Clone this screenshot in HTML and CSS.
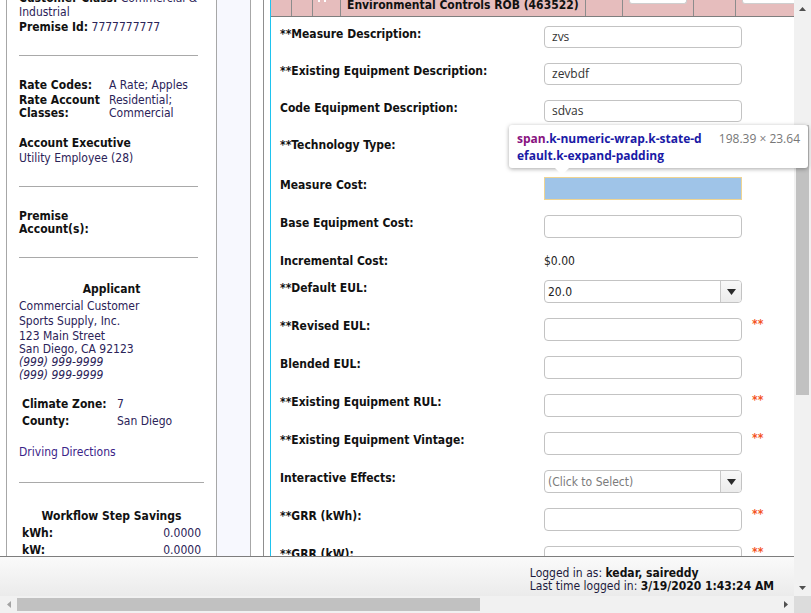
FILE: index.html
```html
<!DOCTYPE html>
<html lang="en">
<head>
<meta charset="utf-8">
<title>Measure Details</title>
<link rel="stylesheet" href="styles.css">
</head>
<body>
<div class="window">
  <div class="viewport">
    <div class="content">
      <div class="gutter"></div>
      <aside class="side">
        <div class="side-inner">
          <div class="l14"><b>Customer Class:</b> <span class="val">Commercial &amp;</span><br><span class="val">Industrial</span></div>
          <div class="l14 m1"><b>Premise Id:</b> <span class="val">7777777777</span></div>
          <hr class="sep sep-short m21">

          <div class="kv m23"><b>Rate Codes:</b><span class="val">A Rate; Apples</span></div>
          <div class="kv m2"><b>Rate Account<br>Classes:</b><span class="val">Residential;<br>Commercial</span></div>

          <div class="ln m17"><b>Account Executive</b></div>
          <div class="ln m2 val">Utility Employee (28)</div>
          <hr class="sep sep-short m21">

          <div class="ln m23"><b>Premise<br>Account(s):</b></div>
          <hr class="sep sep-short m21">

          <div class="ln m25 center"><b>Applicant</b></div>
          <div class="ln m4 val">Commercial Customer</div>
          <div class="ln m2 val">Sports Supply, Inc.</div>
          <div class="ln m2 val">123 Main Street<br>San Diego, CA 92123<br><i>(999) 999-9999</i><br><i>(999) 999-9999</i></div>

          <div class="kv2 m16"><b>Climate Zone:</b><span class="val">7</span></div>
          <div class="kv2 m4"><b>County:</b><span class="val">San Diego</span></div>

          <div class="ln m18"><a class="link" href="#">Driving Directions</a></div>
          <hr class="sep m23">

          <div class="ln m27 center"><b>Workflow Step Savings</b></div>
          <div class="sav m4"><b>kWh:</b><span class="val">0.0000</span></div>
          <div class="sav m4"><b>kW:</b><span class="val">0.0000</span></div>
        </div>
      </aside>
      <div class="strip"></div>
      <div class="divider"></div>
      <main class="main">
        <div class="hdr">
          <div class="hc"></div>
          <div class="hc"></div>
          <div class="hc"><span class="hicon"></span><span class="hicon"></span></div>
          <div class="hc htitle">Environmental Controls ROB (463522)</div>
          <div class="hc"></div>
          <div class="hc"><div class="hbtn"></div></div>
          <div class="hc"></div>
          <div class="hc"><div class="hbtn hbtn-wide"></div></div>
        </div>
        <div class="form">
          <div class="row"><div class="lbl">**Measure Description:</div><div class="tb">zvs</div></div>
          <div class="row"><div class="lbl">**Existing Equipment Description:</div><div class="tb">zevbdf</div></div>
          <div class="row"><div class="lbl">Code Equipment Description:</div><div class="tb">sdvas</div></div>
          <div class="row"><div class="lbl">**Technology Type:</div><div class="dd dd-tall"><span class="dd-val"></span><span class="dd-btn"><svg width="9" height="6" viewBox="0 0 9 6"><polygon points="0,0 9,0 4.5,6" fill="#2b2b2b"/></svg></span></div></div>
          <div class="row"><div class="lbl">Measure Cost:</div><div class="num num-hl"></div></div>
          <div class="row"><div class="lbl">Base Equipment Cost:</div><div class="num"></div></div>
          <div class="row row-text"><div class="lbl">Incremental Cost:</div><div class="plain">$0.00</div></div>
          <div class="row"><div class="lbl">**Default EUL:</div><div class="dd"><span class="dd-val">20.0</span><span class="dd-btn"><svg width="9" height="6" viewBox="0 0 9 6"><polygon points="0,0 9,0 4.5,6" fill="#2b2b2b"/></svg></span></div></div>
          <div class="row"><div class="lbl">**Revised EUL:</div><div class="num"></div><span class="req">**</span></div>
          <div class="row"><div class="lbl">Blended EUL:</div><div class="num"></div></div>
          <div class="row"><div class="lbl">**Existing Equipment RUL:</div><div class="num"></div><span class="req">**</span></div>
          <div class="row"><div class="lbl">**Existing Equipment Vintage:</div><div class="num"></div><span class="req">**</span></div>
          <div class="row"><div class="lbl">Interactive Effects:</div><div class="dd"><span class="dd-val ph">(Click to Select)</span><span class="dd-btn"><svg width="9" height="6" viewBox="0 0 9 6"><polygon points="0,0 9,0 4.5,6" fill="#2b2b2b"/></svg></span></div></div>
          <div class="row"><div class="lbl">**GRR (kWh):</div><div class="num"></div><span class="req">**</span></div>
          <div class="row"><div class="lbl">**GRR (kW):</div><div class="num"></div><span class="req">**</span></div>
        </div>
      </main>
    </div>
    <footer class="footer">
      <div class="login">
        <div>Logged in as: <b>kedar, saireddy</b></div>
        <div>Last time logged in: <b>3/19/2020 1:43:24 AM</b></div>
      </div>
    </footer>
  </div>

  <div class="vscroll">
    <div class="sbtn"><svg width="7" height="4" viewBox="0 0 7 4"><polygon points="0,4 7,4 3.5,0" fill="#505050"/></svg></div>
    <div class="vtrack"><div class="vthumb"></div></div>
    <div class="sbtn"><svg width="7" height="4" viewBox="0 0 7 4"><polygon points="0,0 7,0 3.5,4" fill="#505050"/></svg></div>
  </div>

  <div class="hscroll">
    <div class="sbtn"><svg width="4" height="7" viewBox="0 0 4 7"><polygon points="4,0 4,7 0,3.5" fill="#a3a3a3"/></svg></div>
    <div class="htrack"><div class="hthumb"></div></div>
    <div class="sbtn"><svg width="4" height="7" viewBox="0 0 4 7"><polygon points="0,0 0,7 4,3.5" fill="#505050"/></svg></div>
  </div>
  <div class="corner"></div>

  <div class="tip">
    <div class="tip-name"><span class="tag">span</span>.k-numeric-wrap.k-state-d<br>efault.k-expand-padding</div>
    <div class="tip-dim">198.39 × 23.64</div>
  </div>
</div>
</body>
</html>
```

FILE: styles.css
```css
* { box-sizing: border-box; }
html, body { margin: 0; padding: 0; }
body {
  width: 811px;
  height: 613px;
  overflow: hidden;
  background: #fff;
  color: #111;
  font-family: "DejaVu Sans Condensed", "DejaVu Sans", sans-serif;
  font-stretch: condensed;
  font-size: 12px;
}
b { font-weight: bold; color: #111; }

.window {
  position: relative;
  width: 811px;
  height: 613px;
  display: grid;
  grid-template-columns: 794px 17px;
  grid-template-rows: 596px 17px;
}

.viewport { display: flex; flex-direction: column; overflow: hidden; }
.content { height: 556px; display: flex; overflow: hidden; }
.gutter { width: 6px; flex: none; }

/* left panel */
.side {
  width: 211px;
  flex: none;
  border-left: 1px solid #a7a7a7;
  border-right: 1px solid #a7a7a7;
  overflow: hidden;
}
.side-inner { margin-top: -9px; padding: 0 12px; }
.val { color: #2b2358; }
.l14 { line-height: 14px; }
.ln { line-height: 13px; }
.center { text-align: center; }
.m1 { margin-top: 1px; }
.m2 { margin-top: 2px; }
.m4 { margin-top: 4px; }
.m16 { margin-top: 16px; }
.m17 { margin-top: 17px; }
.m18 { margin-top: 18px; }
.m21 { margin-top: 21px; }
.m23 { margin-top: 23px; }
.m25 { margin-top: 25px; }
.m27 { margin-top: 27px; }
.sep { border: 0; border-top: 1px solid #a9a9a9; height: 0; margin-bottom: 0; margin-left: 0; margin-right: 0; }
.sep-short { margin-right: 6px; }
.kv { display: grid; grid-template-columns: 90px 1fr; line-height: 13px; }
.kv2 { display: grid; grid-template-columns: 95px 1fr; line-height: 13px; padding-left: 3px; }
.sav { display: flex; justify-content: space-between; line-height: 13px; padding: 0 3px 0 3px; }
.link { color: #3a2488; text-decoration: none; }

.strip {
  width: 34px;
  flex: none;
  background: #f7f8fe;
  border-right: 1px solid #a7a7a7;
}
.divider { width: 13px; flex: none; border-right: 1px solid #8f8f8f; }

/* main panel */
.main {
  width: 524px;
  flex: none;
  margin-left: 6px;
  border-left: 1px solid #1ec3ef;
  display: flex;
  flex-direction: column;
  overflow: hidden;
}
.hdr {
  height: 17px;
  flex: none;
  display: grid;
  grid-template-columns: 21px 21px 28px 245px 37px 71px 42px 58px;
  background: #e6bdbd;
  border-bottom: 1px solid #7e7e7e;
  overflow: hidden;
}
.hc { border-right: 1px solid #8c8c8c; overflow: hidden; position: relative; }
.hc:last-child { border-right: 0; }
.htitle {
  font-weight: bold;
  font-size: 12px;
  line-height: 14px;
  padding-left: 6px;
  padding-top: 0;
  margin-top: -2px;
  white-space: nowrap;
  color: #111;
}
.hicon { display: inline-block; width: 2px; height: 2px; background: #fff; margin-left: 4px; vertical-align: top; }
.hicon:first-child { margin-left: 5px; }
.hbtn {
  width: 58px;
  height: 4px;
  margin-left: 6px;
  background: #fff;
  border: 1px solid #cfcfcf;
  border-top: 0;
  border-radius: 0 0 3px 3px;
}
.hbtn-wide { width: 60px; }

.form {
  padding: 9px 0 0 9px;
  display: flex;
  flex-direction: column;
  gap: 15px;
}
.row { display: flex; align-items: flex-start; flex: none; }
.row-text { height: 12px; }
.row-text .lbl, .row-text .plain { line-height: 12px; }
.lbl { width: 264px; flex: none; font-weight: bold; line-height: 13px; padding-top: 2px; color: #111; white-space: nowrap; }
.tb, .num, .dd {
  width: 198px;
  flex: none;
  border: 1px solid #c3c3c3;
  border-radius: 4px;
  background: #fff;
}
.tb {
  height: 22px;
  padding-left: 7px;
  font-family: "Open Sans", sans-serif;
  font-stretch: normal;
  font-size: 12px;
  line-height: 20px;
  color: #333;
}
.num { height: 23px; }
.num-hl { background: #9fc4e8; border-color: #efd492; border-radius: 0; }
.dd { height: 23px; display: flex; overflow: hidden; }
.dd-tall { height: 25px; }
.dd-val { flex: 1; padding-left: 3px; line-height: 21px; padding-top: 1px; color: #222; }
.dd-val.ph { color: #7b7b7b; }
.dd-btn {
  width: 21px;
  flex: none;
  border-left: 1px solid #c8c8c8;
  background: linear-gradient(#f8f8f8, #ececec);
  display: flex;
  align-items: center;
  justify-content: center;
}
.plain { color: #222; padding-top: 2px; }
.req { margin-left: 10px; color: #f4531e; font-weight: bold; line-height: 13px; }

/* footer */
.footer {
  height: 40px;
  flex: none;
  border-top: 1px solid #7d7d7d;
  background: linear-gradient(#fafafa, #ebebeb);
  display: flex;
  justify-content: flex-end;
  padding: 10px 20px 0 0;
  line-height: 13px;
  color: #1d1b3d;
}

/* scrollbars */
.vscroll { background: #f1f1f1; display: flex; flex-direction: column; }
.hscroll { background: #f1f1f1; display: flex; }
.sbtn { width: 17px; height: 17px; flex: none; display: flex; align-items: center; justify-content: center; }
.vtrack { flex: 1; padding: 0 2px; }
.vthumb { margin-top: 108px; height: 270px; background: #c1c1c1; }
.htrack { flex: 1; padding: 2px 0; }
.hthumb { width: 463px; height: 13px; background: #c1c1c1; }
.corner { background: #dcdcdc; }

/* devtools tooltip */
.tip {
  position: absolute;
  left: 509px;
  top: 125px;
  width: 299px;
  height: 43px;
  background: #fff;
  border-radius: 3px;
  box-shadow: 0 1px 4px rgba(0, 0, 0, 0.35);
  padding: 5px 8px 0 8px;
  display: flex;
  justify-content: space-between;
  font-family: "Open Sans", sans-serif;
  font-stretch: normal;
}
.tip::after {
  content: "";
  position: absolute;
  left: 46px;
  bottom: -7px;
  border-left: 7px solid transparent;
  border-right: 7px solid transparent;
  border-top: 7px solid #fff;
}
.tip-name { font-size: 12px; font-weight: 700; line-height: 17px; color: #1a1aa6; white-space: nowrap; }
.tag { color: #881280; }
.tip-dim { font-size: 12px; line-height: 17px; color: #777; white-space: nowrap; }
```
